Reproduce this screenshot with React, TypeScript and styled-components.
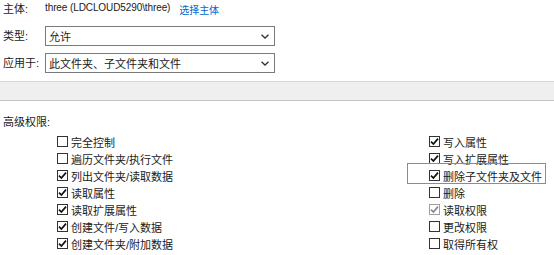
import React from "react";
import styled, { createGlobalStyle } from "styled-components";

const GlobalStyle = createGlobalStyle`
  html, body {
    margin: 0;
    padding: 0;
    background: #fff;
  }
  body {
    font-family: "Liberation Sans", "Noto Sans CJK SC", sans-serif;
    font-size: 11px;
    color: #1a1a1a;
  }
`;

const Page = styled.div`
  position: relative;
  width: 554px;
  height: 255px;
  overflow: hidden;
`;

const Header = styled.div`
  display: grid;
  grid-template-columns: 42px 230px;
  grid-auto-rows: 20px;
  row-gap: 7px;
  align-items: center;
  padding: 0 0 0 3px;
  margin-top: -1px;
`;

const Label = styled.span`
  line-height: 20px;
  white-space: nowrap;
`;

const Principal = styled.div`
  display: flex;
  gap: 9px;
  font-size: 10px;
  letter-spacing: -0.1px;
  white-space: nowrap;
`;

const Link = styled.span`
  color: #0066cc;
`;

const Select = styled.div`
  box-sizing: border-box;
  height: 20px;
  border: 1px solid #7a7a7a;
  display: flex;
  align-items: center;
  justify-content: space-between;
  padding: 0 5px 0 3px;
`;

const Band = styled.div`
  margin-top: 8px;
  height: 18px;
  background: #efefef;
  border-top: 1px solid #d9d9d9;
  border-bottom: 1px solid #c4c4c4;
`;

const SectionTitle = styled.div`
  padding-left: 3px;
  margin-top: 13px;
  line-height: 17px;
`;

const Columns = styled.div`
  display: grid;
  grid-template-columns: 372px 1fr;
  padding-left: 57px;
  margin-top: 2px;
`;

const List = styled.div`
  display: flex;
  flex-direction: column;
`;

const Row = styled.div`
  display: flex;
  align-items: center;
  gap: 3px;
  height: 17px;
  white-space: nowrap;
`;

const Box = styled.span<{ $dim?: boolean }>`
  box-sizing: border-box;
  width: 11px;
  height: 11px;
  border: 1px solid ${(p) => (p.$dim ? "#a0a0a0" : "#333")};
  display: inline-flex;
  align-items: center;
  justify-content: center;
  flex: none;
`;

const Highlight = styled.div`
  position: absolute;
  left: 407px;
  top: 163px;
  width: 139px;
  height: 21px;
  box-sizing: border-box;
  border: 1px solid #ec6268;
`;

type Perm = { label: string; checked?: boolean; dim?: boolean };

const left: Perm[] = [
  { label: "完全控制" },
  { label: "遍历文件夹/执行文件" },
  { label: "列出文件夹/读取数据", checked: true },
  { label: "读取属性", checked: true },
  { label: "读取扩展属性", checked: true },
  { label: "创建文件/写入数据", checked: true },
  { label: "创建文件夹/附加数据", checked: true },
];

const right: Perm[] = [
  { label: "写入属性", checked: true },
  { label: "写入扩展属性", checked: true },
  { label: "删除子文件夹及文件", checked: true },
  { label: "删除" },
  { label: "读取权限", checked: true, dim: true },
  { label: "更改权限" },
  { label: "取得所有权" },
];

const Check = ({ dim }: { dim?: boolean }) => (
  <svg width="9" height="9" viewBox="0 0 9 9">
    <path
      d="M1 4.6 L3.4 7 L8 1.6"
      fill="none"
      stroke={dim ? "#8a8a8a" : "#111"}
      strokeWidth="1.7"
    />
  </svg>
);

const Chevron = () => (
  <svg width="8" height="5" viewBox="0 0 8 5">
    <path d="M0.5 0.8 L4 4 L7.5 0.8" fill="none" stroke="#333" strokeWidth="1.3" />
  </svg>
);

const PermList = ({ items }: { items: Perm[] }) => (
  <List>
    {items.map((p) => (
      <Row key={p.label}>
        <Box $dim={p.dim}>{p.checked && <Check dim={p.dim} />}</Box>
        <span>{p.label}</span>
      </Row>
    ))}
  </List>
);

export default function App() {
  return (
    <Page>
      <GlobalStyle />
      <Header>
        <Label>主体:</Label>
        <Principal>
          <span>three (LDCLOUD5290\three)</span>
          <Link>选择主体</Link>
        </Principal>
        <Label>类型:</Label>
        <Select>
          <span>允许</span>
          <Chevron />
        </Select>
        <Label>应用于:</Label>
        <Select>
          <span>此文件夹、子文件夹和文件</span>
          <Chevron />
        </Select>
      </Header>
      <Band />
      <SectionTitle>高级权限:</SectionTitle>
      <Columns>
        <PermList items={left} />
        <PermList items={right} />
      </Columns>
      <Highlight />
    </Page>
  );
}
